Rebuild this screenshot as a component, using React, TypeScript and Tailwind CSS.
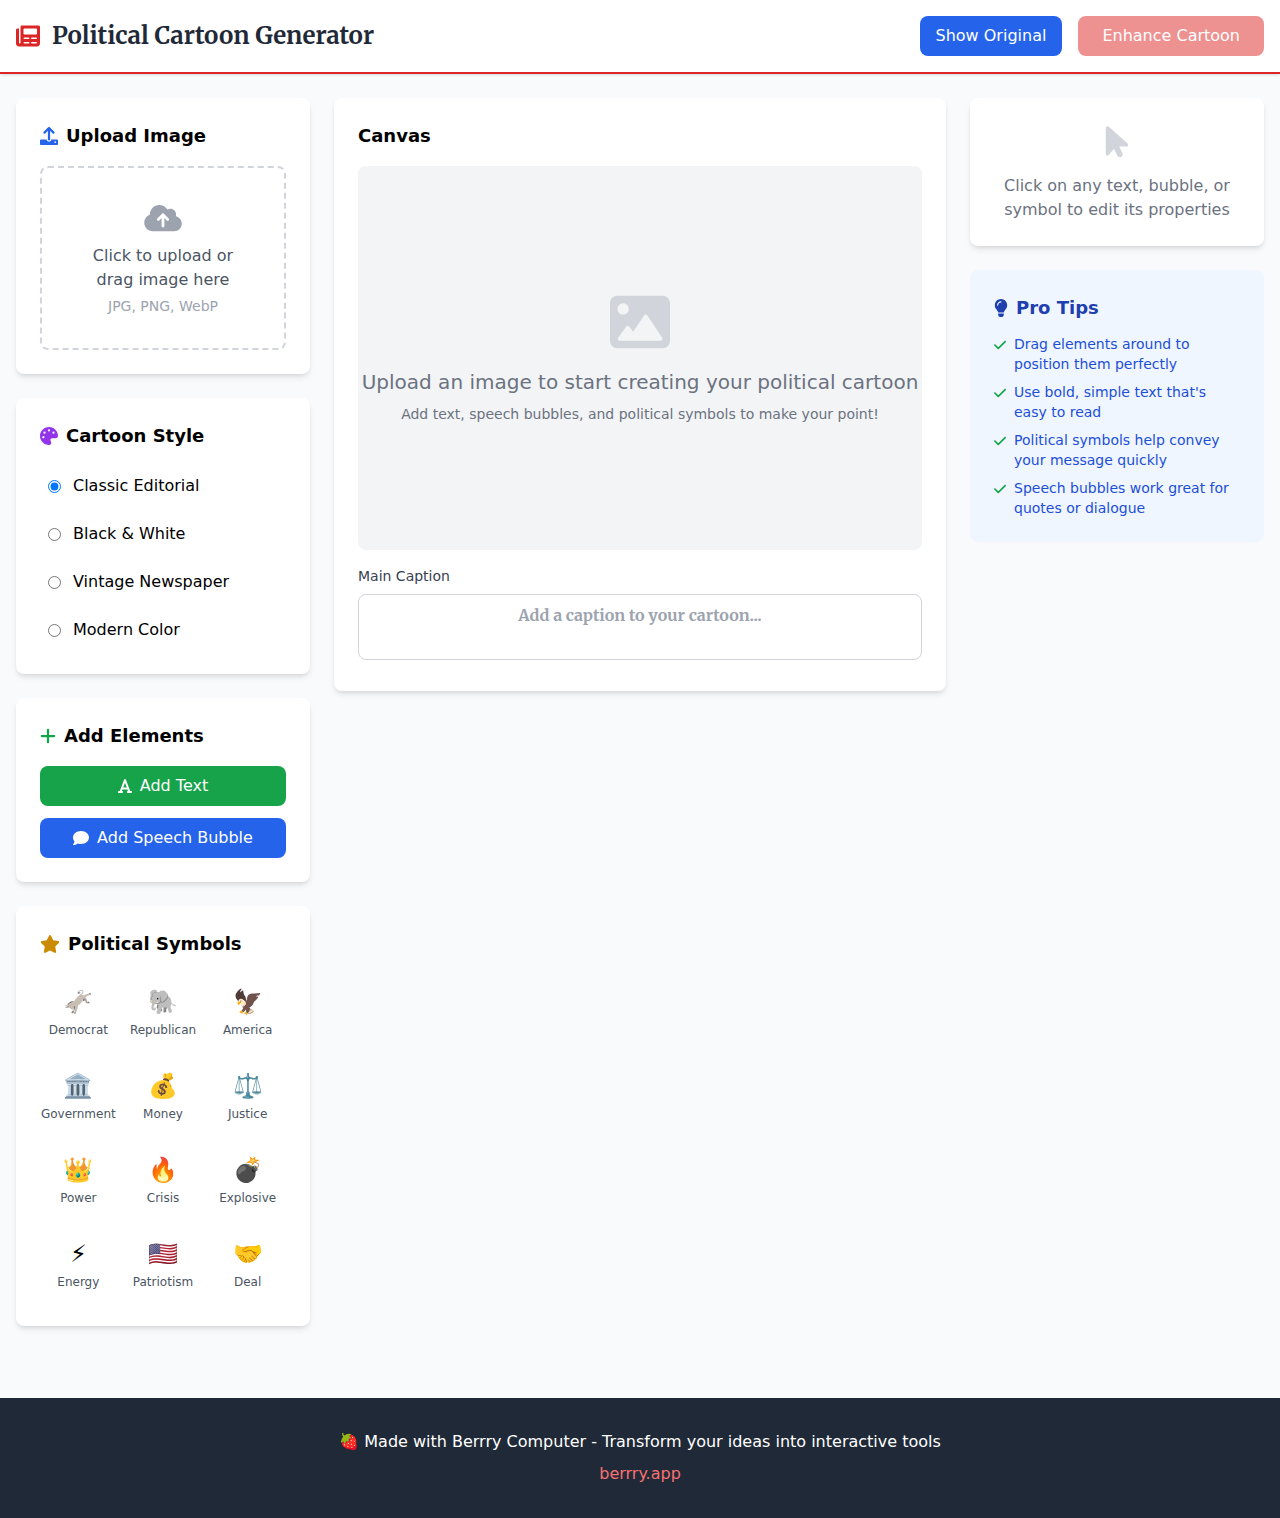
import React, { useState } from "react";
import { FaCloudArrowUp, FaComment, FaPalette, FaStar } from "react-icons/fa6";

const symbols = [
  { emoji: "🫏", name: "Democrat" },
  { emoji: "🐘", name: "Republican" },
  { emoji: "🦅", name: "America" },
  { emoji: "🏛️", name: "Government" },
  { emoji: "💰", name: "Money" },
  { emoji: "⚖️", name: "Justice" },
  { emoji: "👑", name: "Power" },
  { emoji: "🔥", name: "Crisis" },
  { emoji: "💣", name: "Explosive" },
  { emoji: "⚡", name: "Energy" },
  { emoji: "🇺🇸", name: "Patriotism" },
  { emoji: "🤝", name: "Deal" },
];

const cartoonStyles = ["Classic Editorial", "Black & White", "Vintage Newspaper", "Modern Color"];

const tips = [
  "Drag elements around to position them perfectly",
  "Use bold, simple text that's easy to read",
  "Political symbols help convey your message quickly",
  "Speech bubbles work great for quotes or dialogue",
];

type IconProps = { className: string };

function NewspaperIcon({ className }: IconProps) {
  return (
    <svg viewBox="0 0 512 512" fill="currentColor" aria-hidden="true" className={className}>
      <path d="M480 32H128C110.3 32 96 46.33 96 64v336C96 408.8 88.84 416 80 416S64 408.8 64 400V96H32C14.33 96 0 110.3 0 128v288c0 35.35 28.65 64 64 64h384c35.35 0 64-28.65 64-64V64C512 46.33 497.7 32 480 32zM272 416h-96C167.2 416 160 408.8 160 400C160 391.2 167.2 384 176 384h96c8.836 0 16 7.162 16 16C288 408.8 280.8 416 272 416zM272 320h-96C167.2 320 160 312.8 160 304C160 295.2 167.2 288 176 288h96C280.8 288 288 295.2 288 304C288 312.8 280.8 320 272 320zM432 416h-96c-8.836 0-16-7.164-16-16c0-8.838 7.164-16 16-16h96c8.836 0 16 7.162 16 16C448 408.8 440.8 416 432 416zM432 320h-96C327.2 320 320 312.8 320 304C320 295.2 327.2 288 336 288h96C440.8 288 448 295.2 448 304C448 312.8 440.8 320 432 320zM448 208C448 216.8 440.8 224 432 224h-256C167.2 224 160 216.8 160 208v-96C160 103.2 167.2 96 176 96h256C440.8 96 448 103.2 448 112V208z" />
    </svg>
  );
}

function UploadIcon({ className }: IconProps) {
  return (
    <svg viewBox="0 0 512 512" fill="currentColor" aria-hidden="true" className={className}>
      <path d="M105.4 182.6c12.5 12.49 32.76 12.5 45.25 .001L224 109.3V352c0 17.67 14.33 32 32 32c17.67 0 32-14.33 32-32V109.3l73.38 73.38c12.49 12.49 32.75 12.49 45.25-.001c12.49-12.49 12.49-32.75 0-45.25l-128-128C272.4 3.125 264.2 0 256 0S239.6 3.125 233.4 9.375L105.4 137.4C92.88 149.9 92.88 170.1 105.4 182.6zM480 352h-160c0 35.35-28.65 64-64 64s-64-28.65-64-64H32c-17.67 0-32 14.33-32 32v96c0 17.67 14.33 32 32 32h448c17.67 0 32-14.33 32-32v-96C512 366.3 497.7 352 480 352zM432 456c-13.2 0-24-10.8-24-24c0-13.2 10.8-24 24-24s24 10.8 24 24C456 445.2 445.2 456 432 456z" />
    </svg>
  );
}

function PlusIcon({ className }: IconProps) {
  return (
    <svg viewBox="0 0 448 512" fill="currentColor" aria-hidden="true" className={className}>
      <path d="M432 256c0 17.69-14.33 32.01-32 32.01H256v144c0 17.69-14.33 31.99-32 31.99s-32-14.3-32-31.99v-144H48c-17.67 0-32-14.32-32-32.01s14.33-31.99 32-31.99H192v-144c0-17.69 14.33-32.01 32-32.01s32 14.32 32 32.01v144h144C417.7 224 432 238.3 432 256z" />
    </svg>
  );
}

function FontIcon({ className }: IconProps) {
  return (
    <svg viewBox="0 0 448 512" fill="currentColor" aria-hidden="true" className={className}>
      <path d="M416 416h-25.81L253.1 52.76c-4.688-12.47-16.57-20.76-29.91-20.76s-25.34 8.289-30.02 20.76L57.81 416H32c-17.67 0-32 14.31-32 32s14.33 32 32 32h96c17.67 0 32-14.31 32-32s-14.33-32-32-32H126.1l17.1-48h159.8l17.1 48H320c-17.67 0-32 14.31-32 32s14.33 32 32 32h96c17.67 0 32-14.31 32-32S433.7 416 416 416zM168.1 304L224 155.1l55.82 148.9H168.1z" />
    </svg>
  );
}

function ImageIcon({ className }: IconProps) {
  return (
    <svg viewBox="0 0 512 512" fill="currentColor" aria-hidden="true" className={className}>
      <path d="M448 32H64C28.65 32 0 60.65 0 96v320c0 35.35 28.65 64 64 64h384c35.35 0 64-28.65 64-64V96C512 60.65 483.3 32 448 32zM112 96c26.51 0 48 21.49 48 48S138.5 192 112 192s-48-21.49-48-48S85.48 96 112 96zM446.1 407.6C443.3 412.8 437.9 416 432 416H82.01c-6.021 0-11.53-3.379-14.26-8.75c-2.73-5.367-2.215-11.81 1.334-16.68l70-96C142.1 290.4 146.9 288 152 288s9.916 2.441 12.93 6.574l32.46 44.51l93.3-139.1C293.7 194.7 298.7 192 304 192s10.35 2.672 13.31 7.125l128 192C448.6 396 448.9 402.3 446.1 407.6z" />
    </svg>
  );
}

function PointerIcon({ className }: IconProps) {
  return (
    <svg viewBox="0 0 320 512" fill="currentColor" aria-hidden="true" className={className}>
      <path d="M318.4 304.5c-3.531 9.344-12.47 15.52-22.45 15.52h-105l45.15 94.82c9.496 19.94 1.031 43.8-18.91 53.31c-19.95 9.504-43.82 1.035-53.32-18.91L117.3 351.3l-75 88.25c-4.641 5.469-11.37 8.453-18.28 8.453c-2.781 0-5.578-.4844-8.281-1.469C6.281 443.1 0 434.1 0 423.1V56.02c0-9.438 5.531-18.03 14.12-21.91C22.75 30.26 32.83 31.77 39.87 37.1l271.1 240C319.4 284.6 321.1 295.1 318.4 304.5z" />
    </svg>
  );
}

function LightbulbIcon({ className }: IconProps) {
  return (
    <svg viewBox="0 0 384 512" fill="currentColor" aria-hidden="true" className={className}>
      <path d="M112.1 454.3c0 6.297 1.816 12.44 5.284 17.69l17.14 25.69c5.25 7.875 17.17 14.28 26.64 14.28h61.67c9.438 0 21.36-6.401 26.61-14.28l17.08-25.68c2.938-4.438 5.348-12.37 5.348-17.7L272 415.1h-160L112.1 454.3zM191.4 .0132C89.44 .3257 16 82.97 16 175.1c0 44.38 16.44 84.84 43.56 115.8c16.53 18.84 42.34 58.23 52.22 91.45c.0313 .25 .0938 .5166 .125 .7823h160.2c.0313-.2656 .0938-.5166 .125-.7823c9.875-33.22 35.69-72.61 52.22-91.45C351.6 260.8 368 220.4 368 175.1C368 78.61 288.9-.2837 191.4 .0132zM192 96.01c-44.13 0-80 35.89-80 79.1C112 184.8 104.8 192 96 192S80 184.8 80 176c0-61.76 50.25-111.1 112-111.1c8.844 0 16 7.159 16 16S200.8 96.01 192 96.01z" />
    </svg>
  );
}

function CheckIcon({ className }: IconProps) {
  return (
    <svg viewBox="0 0 448 512" fill="currentColor" aria-hidden="true" className={className}>
      <path d="M438.6 105.4C451.1 117.9 451.1 138.1 438.6 150.6L182.6 406.6C170.1 419.1 149.9 419.1 137.4 406.6L9.372 278.6C-3.124 266.1-3.124 245.9 9.372 233.4C21.87 220.9 42.13 220.9 54.63 233.4L159.1 338.7L393.4 105.4C405.9 92.88 426.1 92.88 438.6 105.4H438.6z" />
    </svg>
  );
}

function Card({ children }: { children: React.ReactNode }) {
  return <section className="rounded-lg bg-white p-6 shadow-md">{children}</section>;
}

function CardTitle({ icon, children }: { icon?: React.ReactNode; children: React.ReactNode }) {
  return (
    <h2 className="mb-4 flex items-center gap-2 text-lg font-bold">
      {icon}
      {children}
    </h2>
  );
}

export default function App() {
  const [style, setStyle] = useState(cartoonStyles[0]);
  const [caption, setCaption] = useState("");

  return (
    <div className="min-h-screen bg-[#f9fafb] font-['DejaVu_Sans',sans-serif] text-black">
      <header className="border-b-2 border-[#dc2626] bg-white shadow-sm">
        <div className="flex items-center justify-between p-4">
          <div className="flex items-center gap-3">
            <NewspaperIcon className="size-6 text-[#dc2626]" />
            <h1 className="font-['Merriweather',serif] text-2xl font-bold text-[#1f2937]">
              Political Cartoon Generator
            </h1>
          </div>
          <div className="flex items-center gap-4">
            <button type="button" className="rounded-lg bg-[#2563eb] px-4 py-2 text-white">
              Show Original
            </button>
            <button type="button" disabled className="rounded-lg bg-[#dc2626] px-6 py-2 text-white opacity-50">
              Enhance Cartoon
            </button>
          </div>
        </div>
      </header>

      <main className="grid grid-cols-4 items-start gap-6 px-4 py-6">
        <div className="flex flex-col gap-6">
          <Card>
            <CardTitle icon={<UploadIcon className="size-[18px] text-[#2563eb]" />}>Upload Image</CardTitle>
            <label className="block cursor-pointer rounded-lg border-2 border-dashed border-[#d1d5db] p-8 text-center">
              <input type="file" accept="image/*" className="sr-only" />
              <span className="mb-2 flex h-9 items-center justify-center">
                <FaCloudArrowUp className="h-[30px] w-[38px] text-[#9ca3af]" />
              </span>
              <span className="block text-[#4b5563]">Click to upload or drag image here</span>
              <span className="mt-1 block text-sm text-[#9ca3af]">JPG, PNG, WebP</span>
            </label>
          </Card>

          <Card>
            <CardTitle icon={<FaPalette className="size-[18px] text-[#9333ea]" />}>Cartoon Style</CardTitle>
            <div className="flex flex-col gap-2">
              {cartoonStyles.map((name) => (
                <label key={name} className="flex cursor-pointer items-center gap-3 rounded p-2">
                  <input
                    type="radio"
                    name="cartoon-style"
                    value={name}
                    checked={name === style}
                    onChange={() => setStyle(name)}
                  />
                  {name}
                </label>
              ))}
            </div>
          </Card>

          <Card>
            <CardTitle icon={<PlusIcon className="h-[18px] w-4 text-[#16a34a]" />}>Add Elements</CardTitle>
            <div className="flex flex-col gap-3">
              <button
                type="button"
                className="flex items-center justify-center gap-2 rounded-lg bg-[#16a34a] px-4 py-2 text-white"
              >
                <FontIcon className="h-4 w-3.5" />
                Add Text
              </button>
              <button
                type="button"
                className="flex items-center justify-center gap-2 rounded-lg bg-[#2563eb] px-4 py-2 text-white"
              >
                <FaComment className="size-4" />
                Add Speech Bubble
              </button>
            </div>
          </Card>

          <Card>
            <CardTitle icon={<FaStar className="h-[18px] w-5 text-[#ca8a04]" />}>Political Symbols</CardTitle>
            <div className="grid grid-cols-3 gap-2">
              {symbols.map(({ emoji, name }) => (
                <button key={name} type="button" className="flex flex-col items-center gap-1 rounded-lg p-3">
                  <span className="text-2xl">{emoji}</span>
                  <span className="text-xs text-[#4b5563]">{name}</span>
                </button>
              ))}
            </div>
          </Card>
        </div>

        <div className="col-span-2">
          <Card>
            <CardTitle>Canvas</CardTitle>
            <div className="mb-4 flex min-h-96 flex-col items-center justify-center rounded-lg bg-[#f3f4f6] text-center text-[#6b7280]">
              <ImageIcon className="mb-4 size-[60px] text-[#d1d5db]" />
              <p className="mb-2 text-xl">Upload an image to start creating your political cartoon</p>
              <p className="text-sm">Add text, speech bubbles, and political symbols to make your point!</p>
            </div>
            <label htmlFor="caption" className="mb-2 block text-sm text-[#374151]">
              Main Caption
            </label>
            <textarea
              id="caption"
              rows={2}
              value={caption}
              onChange={(e) => setCaption(e.target.value)}
              placeholder="Add a caption to your cartoon..."
              className="w-full resize-none rounded-lg border border-[#d1d5db] px-3 py-2 text-center font-['Merriweather',serif] font-bold placeholder:text-[#9ca3af]"
            />
          </Card>
        </div>

        <div className="flex flex-col gap-6">
          <Card>
            <div className="text-center text-[#6b7280]">
              <div className="mb-3 flex h-10 items-center justify-center">
                <PointerIcon className="h-9 w-6 text-[#d1d5db]" />
              </div>
              <p>Click on any text, bubble, or symbol to edit its properties</p>
            </div>
          </Card>

          <section className="rounded-lg bg-[#eff6ff] p-6">
            <h2 className="mb-3 flex items-center gap-2 text-lg font-bold text-[#1e40af]">
              <LightbulbIcon className="h-[18px] w-3.5" />
              Pro Tips
            </h2>
            <ul className="flex flex-col gap-2 text-sm text-[#1d4ed8]">
              {tips.map((tip) => (
                <li key={tip} className="flex items-start gap-2">
                  <CheckIcon className="mt-1 h-3.5 w-3 shrink-0 text-[#16a34a]" />
                  <span>{tip}</span>
                </li>
              ))}
            </ul>
          </section>
        </div>
      </main>

      <footer className="mt-12 bg-[#1f2937] py-8 text-center text-white">
        <p className="mb-2">🍓 Made with Berrry Computer - Transform your ideas into interactive tools</p>
        <a href="https://berrry.app" className="text-[#f87171]">
          berrry.app
        </a>
      </footer>
    </div>
  );
}
